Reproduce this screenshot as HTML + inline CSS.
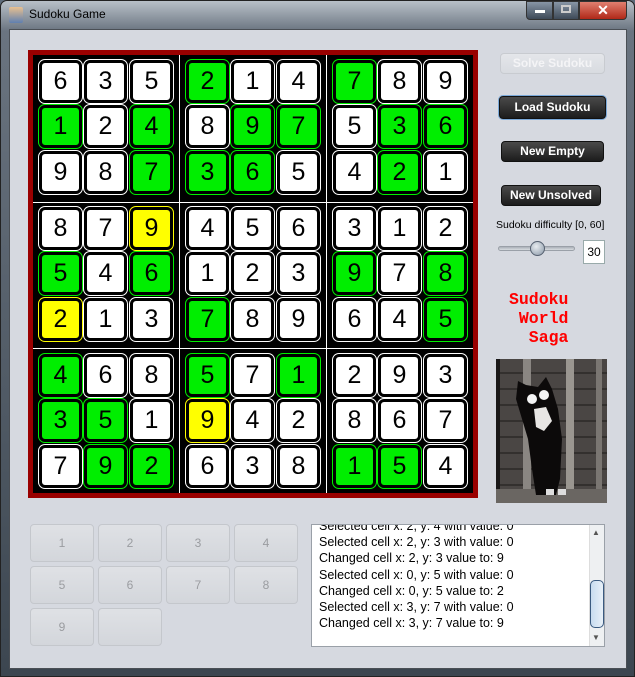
<!DOCTYPE html>
<html><head><meta charset="utf-8"><style>
*{margin:0;padding:0;box-sizing:border-box}
body{width:635px;height:677px;overflow:hidden;background:#5d6b7a;font-family:"Liberation Sans",sans-serif;position:relative}
.abs{position:absolute}
.frame{left:0;top:0;width:635px;height:677px;background:linear-gradient(180deg,#b8c0c8 0,#6a7480 30px,#3c4650 100%);border:1px solid #222;border-radius:7px 7px 0 0}
.content{left:9px;top:29px;width:618px;height:640px;background:#d6d9e0;border:1px solid #4a4f55}
.c{position:absolute;width:43px;height:43px;border:3px solid #000;border-radius:6px;background:#fff;font-size:25px;text-align:center;line-height:37px;color:#000;box-shadow:0 0 0 1px #fff}
.g{background:#00ee00;box-shadow:0 0 0 1px #00ee00}.y{background:#ffff00;box-shadow:0 0 0 1px #ffff00}
.btn{position:absolute;border-radius:4px;color:#fff;font-weight:bold;font-size:12px;text-align:center;background:linear-gradient(#4a4a4a,#1c1c1c);border:1px solid #111}
.nb{position:absolute;width:64px;height:38px;border:1px solid #c4c7cc;border-radius:4px;background:linear-gradient(#dfe1e5,#d3d6db);color:#9a9ca0;font-size:12px;text-align:center;line-height:36px}
.log div{height:16.2px;font-size:12.5px;color:#000;white-space:nowrap}
</style></head><body>
<div class="abs frame"></div>
<div class="abs" style="left:9px;top:7px;width:14px;height:16px;background:linear-gradient(#e8c090,#6080b0);border-radius:2px"></div>
<div class="abs" style="left:29px;top:7px;font-size:12px;color:#000">Sudoku Game</div>
<div class="abs" style="left:526px;top:1px;width:27px;height:19px;background:linear-gradient(#8896a6,#3e4a58);border:1px solid #333;border-radius:0 0 0 4px"></div>
<div class="abs" style="left:535px;top:10px;width:10px;height:3px;background:#fff"></div>
<div class="abs" style="left:553px;top:1px;width:26px;height:19px;background:linear-gradient(#8896a6,#3e4a58);border:1px solid #333"></div>
<div class="abs" style="left:561px;top:5px;width:10px;height:8px;border:2px solid #ccc"></div>
<div class="abs" style="left:579px;top:1px;width:48px;height:19px;background:linear-gradient(#e08070,#b02818);border:1px solid #333;border-radius:0 0 4px 0;color:#fff;font-weight:bold;font-size:14px;text-align:center;line-height:17px">✕</div>
<div class="abs content"></div>

<div class="abs" style="left:28px;top:50px;width:450px;height:448px;background:#990000"></div>
<div class="abs" style="left:33px;top:55px;width:440px;height:438px;background:#000"></div>
<div class="abs" style="left:179px;top:55px;width:1px;height:438px;background:#fff"></div>
<div class="abs" style="left:326px;top:55px;width:1px;height:438px;background:#fff"></div>
<div class="abs" style="left:33px;top:202px;width:440px;height:1px;background:#fff"></div>
<div class="abs" style="left:33px;top:348px;width:440px;height:1px;background:#fff"></div>

<div class="c" style="left:39px;top:60px">6</div><div class="c" style="left:84px;top:60px">3</div><div class="c" style="left:130px;top:60px">5</div><div class="c g" style="left:186px;top:60px">2</div><div class="c" style="left:231px;top:60px">1</div><div class="c" style="left:277px;top:60px">4</div><div class="c g" style="left:333px;top:60px">7</div><div class="c" style="left:378px;top:60px">8</div><div class="c" style="left:424px;top:60px">9</div>
<div class="c g" style="left:39px;top:105px">1</div><div class="c" style="left:84px;top:105px">2</div><div class="c g" style="left:130px;top:105px">4</div><div class="c" style="left:186px;top:105px">8</div><div class="c g" style="left:231px;top:105px">9</div><div class="c g" style="left:277px;top:105px">7</div><div class="c" style="left:333px;top:105px">5</div><div class="c g" style="left:378px;top:105px">3</div><div class="c g" style="left:424px;top:105px">6</div>
<div class="c" style="left:39px;top:151px">9</div><div class="c" style="left:84px;top:151px">8</div><div class="c g" style="left:130px;top:151px">7</div><div class="c g" style="left:186px;top:151px">3</div><div class="c g" style="left:231px;top:151px">6</div><div class="c" style="left:277px;top:151px">5</div><div class="c" style="left:333px;top:151px">4</div><div class="c g" style="left:378px;top:151px">2</div><div class="c" style="left:424px;top:151px">1</div>
<div class="c" style="left:39px;top:207px">8</div><div class="c" style="left:84px;top:207px">7</div><div class="c y" style="left:130px;top:207px">9</div><div class="c" style="left:186px;top:207px">4</div><div class="c" style="left:231px;top:207px">5</div><div class="c" style="left:277px;top:207px">6</div><div class="c" style="left:333px;top:207px">3</div><div class="c" style="left:378px;top:207px">1</div><div class="c" style="left:424px;top:207px">2</div>
<div class="c g" style="left:39px;top:252px">5</div><div class="c" style="left:84px;top:252px">4</div><div class="c g" style="left:130px;top:252px">6</div><div class="c" style="left:186px;top:252px">1</div><div class="c" style="left:231px;top:252px">2</div><div class="c" style="left:277px;top:252px">3</div><div class="c g" style="left:333px;top:252px">9</div><div class="c" style="left:378px;top:252px">7</div><div class="c g" style="left:424px;top:252px">8</div>
<div class="c y" style="left:39px;top:298px">2</div><div class="c" style="left:84px;top:298px">1</div><div class="c" style="left:130px;top:298px">3</div><div class="c g" style="left:186px;top:298px">7</div><div class="c" style="left:231px;top:298px">8</div><div class="c" style="left:277px;top:298px">9</div><div class="c" style="left:333px;top:298px">6</div><div class="c" style="left:378px;top:298px">4</div><div class="c g" style="left:424px;top:298px">5</div>
<div class="c g" style="left:39px;top:354px">4</div><div class="c" style="left:84px;top:354px">6</div><div class="c" style="left:130px;top:354px">8</div><div class="c g" style="left:186px;top:354px">5</div><div class="c" style="left:231px;top:354px">7</div><div class="c g" style="left:277px;top:354px">1</div><div class="c" style="left:333px;top:354px">2</div><div class="c" style="left:378px;top:354px">9</div><div class="c" style="left:424px;top:354px">3</div>
<div class="c g" style="left:39px;top:399px">3</div><div class="c g" style="left:84px;top:399px">5</div><div class="c" style="left:130px;top:399px">1</div><div class="c y" style="left:186px;top:399px">9</div><div class="c" style="left:231px;top:399px">4</div><div class="c" style="left:277px;top:399px">2</div><div class="c" style="left:333px;top:399px">8</div><div class="c" style="left:378px;top:399px">6</div><div class="c" style="left:424px;top:399px">7</div>
<div class="c" style="left:39px;top:445px">7</div><div class="c g" style="left:84px;top:445px">9</div><div class="c g" style="left:130px;top:445px">2</div><div class="c" style="left:186px;top:445px">6</div><div class="c" style="left:231px;top:445px">3</div><div class="c" style="left:277px;top:445px">8</div><div class="c g" style="left:333px;top:445px">1</div><div class="c g" style="left:378px;top:445px">5</div><div class="c" style="left:424px;top:445px">4</div>

<div class="btn" style="left:500px;top:53px;width:105px;height:21px;background:linear-gradient(#e4e6ea,#d8dbe0);border:1px solid #c8cbd0;color:#f4f4f6;line-height:19px">Solve Sudoku</div>
<div class="btn" style="left:499px;top:96px;width:107px;height:23px;line-height:21px;box-shadow:0 0 0 1px #7aa8d8">Load Sudoku</div>
<div class="btn" style="left:501px;top:141px;width:103px;height:21px;line-height:19px">New Empty</div>
<div class="btn" style="left:501px;top:185px;width:100px;height:21px;line-height:19px">New Unsolved</div>
<div class="abs" style="left:496px;top:219px;font-size:10.5px;color:#000">Sudoku difficulty [0, 60]</div>
<div class="abs" style="left:498px;top:246px;width:77px;height:5px;border-radius:3px;background:linear-gradient(#aab0b8,#d8dce0);border:1px solid #9aa0a8"></div>
<div class="abs" style="left:530px;top:241px;width:15px;height:15px;border-radius:50%;background:radial-gradient(circle at 40% 35%,#e8ecf0,#8a98a8);border:1px solid #556070"></div>
<div class="abs" style="left:583px;top:240px;width:22px;height:24px;background:#fff;border:1px solid #9aa;font-size:12px;text-align:center;line-height:22px">30</div>
<div class="abs" style="left:509px;top:290px;font-family:'Liberation Mono',monospace;font-size:16.5px;font-weight:bold;line-height:19px;color:#ff0000;white-space:pre">Sudoku
 World
  Saga</div>
<svg class="abs" style="left:496px;top:359px" width="111" height="144" viewBox="0 0 111 144">
<rect width="111" height="144" fill="#4a4644"/>
<g stroke="#33302e" stroke-width="2"><line x1="0" y1="14" x2="111" y2="14"/><line x1="0" y1="30" x2="111" y2="30"/><line x1="0" y1="46" x2="111" y2="46"/><line x1="0" y1="62" x2="111" y2="62"/><line x1="0" y1="78" x2="111" y2="78"/><line x1="0" y1="94" x2="111" y2="94"/><line x1="0" y1="110" x2="111" y2="110"/><line x1="0" y1="126" x2="111" y2="126"/></g>
<rect x="0" y="0" width="4" height="144" fill="#1a1818"/>
<rect x="27" y="0" width="8" height="144" fill="#8a8682"/>
<rect x="70" y="0" width="8" height="144" fill="#9a9690"/>
<rect x="100" y="0" width="6" height="144" fill="#7a7672"/>
<rect x="0" y="130" width="111" height="14" fill="#6a6662"/>
<path d="M22 22 L30 26 L42 28 L50 18 L56 30 L62 50 L66 80 L64 120 L60 136 L40 136 L36 110 L32 80 L26 60 L20 40 Z" fill="#0c0a0a"/>
<path d="M38 50 L50 48 L56 62 L48 72 L40 68 Z" fill="#e8e6e4"/>
<circle cx="36" cy="40" r="5" fill="#f4f4f4"/><circle cx="48" cy="36" r="5" fill="#f4f4f4"/>
<rect x="50" y="130" width="8" height="6" fill="#ddd"/><rect x="62" y="130" width="8" height="6" fill="#ddd"/>
</svg>

<div class="nb" style="left:30px;top:524px">1</div><div class="nb" style="left:98px;top:524px">2</div><div class="nb" style="left:166px;top:524px">3</div><div class="nb" style="left:234px;top:524px">4</div>
<div class="nb" style="left:30px;top:566px">5</div><div class="nb" style="left:98px;top:566px">6</div><div class="nb" style="left:166px;top:566px">7</div><div class="nb" style="left:234px;top:566px">8</div>
<div class="nb" style="left:30px;top:608px">9</div><div class="nb" style="left:98px;top:608px"></div>

<div class="abs log" style="left:311px;top:524px;width:294px;height:123px;background:#fff;border:1px solid #9aa0a8;overflow:hidden;padding:0 0 0 7px">
<div style="margin-top:-6px">Selected cell x: 2, y: 4 with value: 0</div>
<div>Selected cell x: 2, y: 3 with value: 0</div>
<div>Changed cell x: 2, y: 3 value to: 9</div>
<div>Selected cell x: 0, y: 5 with value: 0</div>
<div>Changed cell x: 0, y: 5 value to: 2</div>
<div>Selected cell x: 3, y: 7 with value: 0</div>
<div>Changed cell x: 3, y: 7 value to: 9</div>
</div>
<div class="abs" style="left:589px;top:525px;width:15px;height:121px;background:#eef0f2;border-left:1px solid #ddd"></div>
<div class="abs" style="left:592px;top:528px;font-size:8px;color:#555">▲</div>
<div class="abs" style="left:592px;top:633px;font-size:8px;color:#555">▼</div>
<div class="abs" style="left:590px;top:580px;width:14px;height:48px;border-radius:5px;background:linear-gradient(90deg,#c8dcf0,#e8f0f8);border:1px solid #3a5a80"></div>
</body></html>
